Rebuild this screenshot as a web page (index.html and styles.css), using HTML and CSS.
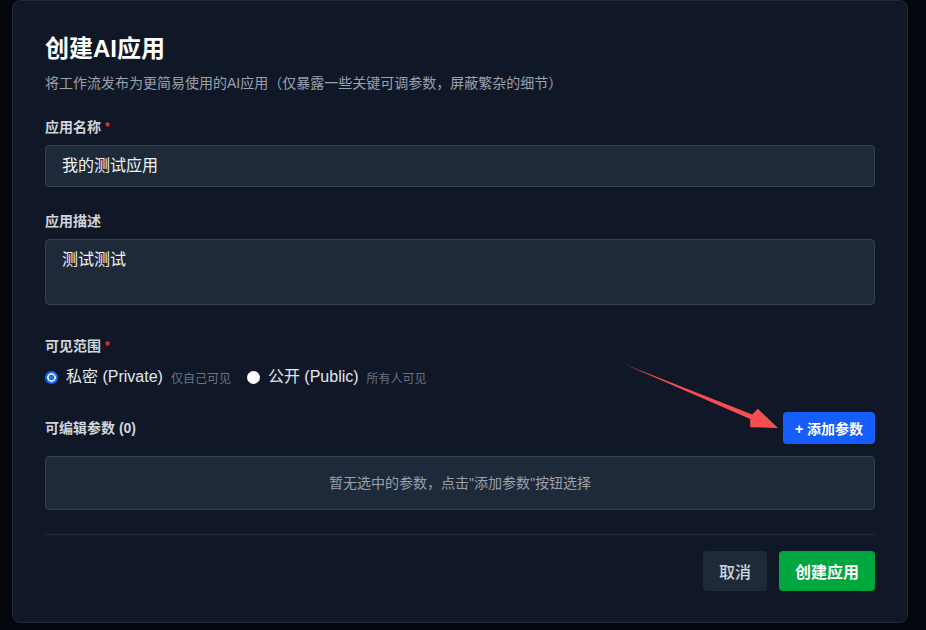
FILE: index.html
```html
<!DOCTYPE html>
<html lang="zh-CN">
<head>
<meta charset="utf-8">
<title>创建AI应用</title>
<link rel="stylesheet" href="styles.css">
</head>
<body>
<div class="modal">
  <h1 class="title">创建AI应用</h1>
  <p class="subtitle">将工作流发布为更简易使用的AI应用（仅暴露一些关键可调参数，屏蔽繁杂的细节）</p>

  <div class="field">
    <label class="label">应用名称 <span class="req">*</span></label>
    <input class="input" type="text" value="我的测试应用">
  </div>

  <div class="field">
    <label class="label">应用描述</label>
    <textarea class="input textarea" rows="2">测试测试</textarea>
  </div>

  <div class="field field-vis">
    <label class="label">可见范围 <span class="req">*</span></label>
    <div class="radios">
      <label class="radio"><input type="radio" name="vis" class="radio-dot checked" checked><span class="radio-text">私密 (Private)</span><span class="hint">仅自己可见</span></label>
      <label class="radio"><input type="radio" name="vis" class="radio-dot"><span class="radio-text">公开 (Public)</span><span class="hint">所有人可见</span></label>
    </div>
  </div>

  <div class="params-head">
    <span class="label">可编辑参数 (0)</span>
    <button class="btn btn-blue">+ 添加参数</button>
  </div>
  <div class="empty">暂无选中的参数，点击"添加参数"按钮选择</div>

  <div class="footer">
    <button class="btn btn-gray">取消</button>
    <button class="btn btn-green">创建应用</button>
  </div>
</div>

<svg class="arrow" width="926" height="630" viewBox="0 0 926 630">
  <polygon points="624,364 752.2,414.5 757.8,408.8 778,428 750.2,427.2 750.2,419.1" fill="#f84e4f"/>
</svg>
</body>
</html>
```

FILE: styles.css
```css
* { box-sizing: border-box; }
html, body { margin: 0; padding: 0; }
body {
  background: #03060d;
  font-family: "Liberation Sans", "Noto Sans CJK SC", sans-serif;
  width: 926px;
  height: 630px;
  overflow: hidden;
  position: relative;
}
.modal {
  margin-left: 12px;
  width: 896px;
  height: 623px;
  background: #101828;
  border: 1px solid #1e2939;
  border-radius: 8px;
  padding: 32px;
  display: flex;
  flex-direction: column;
}
.title {
  margin: 0;
  font-size: 24px;
  line-height: 32px;
  font-weight: 700;
  color: #ffffff;
}
.subtitle {
  margin: 8px 0 0;
  font-size: 14px;
  line-height: 20px;
  color: #99a1af;
}
.field {
  margin-top: 24px;
  display: flex;
  flex-direction: column;
}
.field-vis { margin-top: 31px; }
.label {
  font-size: 14px;
  line-height: 20px;
  font-weight: 600;
  color: #d1d5dc;
  margin-bottom: 8px;
}
.req { color: #fb2c36; font-size: 12px; vertical-align: top; }
.input {
  display: block;
  width: 100%;
  background: #1e2939;
  border: 1px solid #364153;
  border-radius: 4px;
  padding: 8px 16px;
  font-family: inherit;
  font-size: 16px;
  line-height: 24px;
  color: #f3f4f6;
  outline: none;
  margin: 0;
}
.textarea {
  height: 66px;
  resize: none;
  overflow: hidden;
}
.radios {
  display: flex;
  align-items: center;
  gap: 16px;
  height: 26px;
}
.radio {
  display: flex;
  align-items: center;
}
.radio-dot {
  appearance: none;
  -webkit-appearance: none;
  margin: 0 8px 0 0;
  width: 13px;
  height: 13px;
  border-radius: 50%;
  background: #ffffff;
  border: none;
}
.radio-dot.checked {
  background: radial-gradient(circle, #1a6cf0 0 2.6px, #e8f0ff 3.2px 4px, #1a6cf0 4.6px);
}
.radio-text {
  font-size: 16px;
  line-height: 24px;
  color: #e5e7eb;
}
.hint {
  font-size: 12px;
  color: #6a7282;
  margin-left: 8px;
}
.params-head {
  margin-top: 22px;
  display: flex;
  justify-content: space-between;
  align-items: center;
  height: 32px;
}
.params-head .label { margin-bottom: 0; }
.btn {
  border: none;
  border-radius: 4px;
  font-family: inherit;
  cursor: pointer;
  padding: 0 16px;
}
.btn-blue {
  height: 32px;
  padding: 0 12px;
  background: #155dfc;
  color: #ffffff;
  font-size: 14px;
  font-weight: 700;
}
.empty {
  margin-top: 12px;
  background: #1e2939;
  border: 1px solid #364153;
  border-radius: 4px;
  padding: 16px;
  font-size: 14px;
  line-height: 20px;
  color: #99a1af;
  text-align: center;
}
.footer {
  margin-top: 24px;
  border-top: 1px solid #1e2939;
  padding-top: 16px;
  display: flex;
  justify-content: flex-end;
  gap: 12px;
}
.btn-gray {
  height: 40px;
  background: #1e2939;
  color: #d1d5dc;
  font-size: 16px;
  font-weight: 500;
}
.btn-green {
  height: 40px;
  background: #00a63e;
  color: #ffffff;
  font-size: 16px;
  font-weight: 700;
}
.arrow {
  position: absolute;
  top: 0;
  left: 0;
  pointer-events: none;
}
```
